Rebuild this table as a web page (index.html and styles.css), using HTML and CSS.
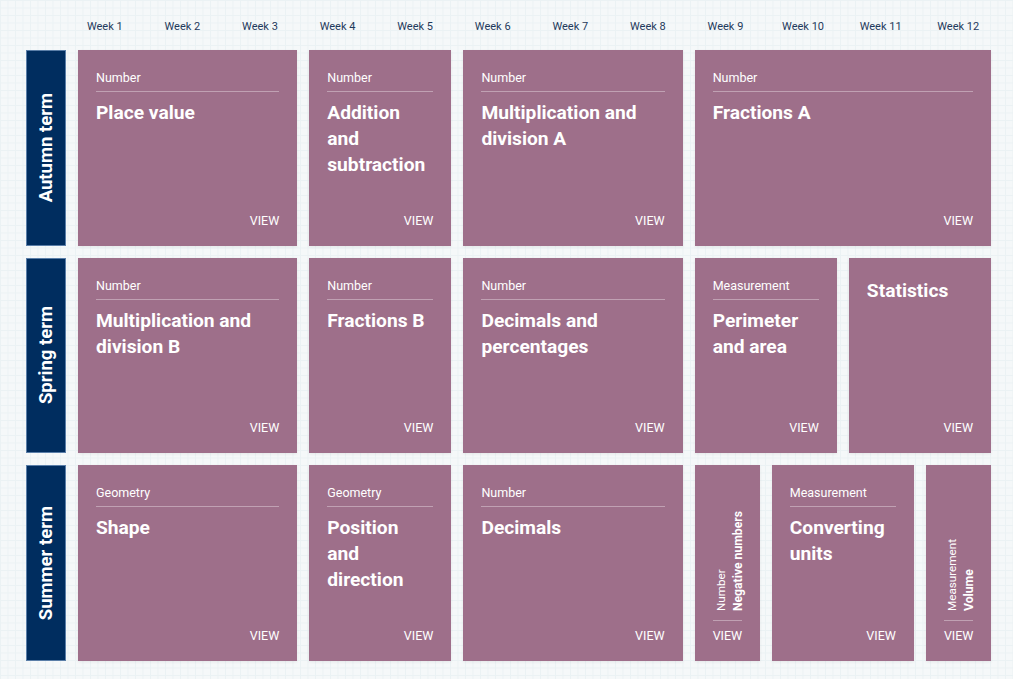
FILE: index.html
```html
<!DOCTYPE html>
<html lang="en">
<head>
<meta charset="utf-8">
<title>Year overview</title>
<link rel="stylesheet" href="styles.css">
</head>
<body>
<main class="planner">
  <div class="weeks">
    <span>Week 1</span><span>Week 2</span><span>Week 3</span><span>Week 4</span>
    <span>Week 5</span><span>Week 6</span><span>Week 7</span><span>Week 8</span>
    <span>Week 9</span><span>Week 10</span><span>Week 11</span><span>Week 12</span>
  </div>

  <section class="term">
    <h2 class="term-label"><span>Autumn term</span></h2>
    <article class="card span-3">
      <div class="card-cat">Number</div>
      <h3 class="card-title">Place value</h3>
      <a class="card-view">VIEW</a>
    </article>
    <article class="card span-2">
      <div class="card-cat">Number</div>
      <h3 class="card-title">Addition and subtraction</h3>
      <a class="card-view">VIEW</a>
    </article>
    <article class="card span-3">
      <div class="card-cat">Number</div>
      <h3 class="card-title">Multiplication and division A</h3>
      <a class="card-view">VIEW</a>
    </article>
    <article class="card span-4">
      <div class="card-cat">Number</div>
      <h3 class="card-title">Fractions A</h3>
      <a class="card-view">VIEW</a>
    </article>
  </section>

  <section class="term">
    <h2 class="term-label"><span>Spring term</span></h2>
    <article class="card span-3">
      <div class="card-cat">Number</div>
      <h3 class="card-title">Multiplication and division B</h3>
      <a class="card-view">VIEW</a>
    </article>
    <article class="card span-2">
      <div class="card-cat">Number</div>
      <h3 class="card-title">Fractions B</h3>
      <a class="card-view">VIEW</a>
    </article>
    <article class="card span-3">
      <div class="card-cat">Number</div>
      <h3 class="card-title">Decimals and percentages</h3>
      <a class="card-view">VIEW</a>
    </article>
    <article class="card span-2">
      <div class="card-cat">Measurement</div>
      <h3 class="card-title">Perimeter and area</h3>
      <a class="card-view">VIEW</a>
    </article>
    <article class="card span-2">
      <h3 class="card-title">Statistics</h3>
      <a class="card-view">VIEW</a>
    </article>
  </section>

  <section class="term">
    <h2 class="term-label"><span>Summer term</span></h2>
    <article class="card span-3">
      <div class="card-cat">Geometry</div>
      <h3 class="card-title">Shape</h3>
      <a class="card-view">VIEW</a>
    </article>
    <article class="card span-2">
      <div class="card-cat">Geometry</div>
      <h3 class="card-title">Position and direction</h3>
      <a class="card-view">VIEW</a>
    </article>
    <article class="card span-3">
      <div class="card-cat">Number</div>
      <h3 class="card-title">Decimals</h3>
      <a class="card-view">VIEW</a>
    </article>
    <article class="card card-narrow span-1">
      <div class="vert">
        <div class="vert-text"><span class="vert-cat">Number</span><span class="vert-title">Negative numbers</span></div>
      </div>
      <a class="card-view">VIEW</a>
    </article>
    <article class="card span-2">
      <div class="card-cat">Measurement</div>
      <h3 class="card-title">Converting units</h3>
      <a class="card-view">VIEW</a>
    </article>
    <article class="card card-narrow span-1">
      <div class="vert">
        <div class="vert-text"><span class="vert-cat">Measurement</span><span class="vert-title">Volume</span></div>
      </div>
      <a class="card-view">VIEW</a>
    </article>
  </section>
</main>
</body>
</html>
```

FILE: styles.css
```css
html, body {
  margin: 0;
  padding: 0;
}

body {
  width: 1013px;
  height: 679px;
  overflow: hidden;
  font-family: Roboto, "Liberation Sans", Arial, sans-serif;
  background-color: #f5f8f9;
  background-image:
    linear-gradient(to right, #ebf2f4 1px, transparent 1px),
    linear-gradient(to bottom, #ebf2f4 1px, transparent 1px);
  background-size: 7.5px 7.5px;
}

.planner {
  padding: 14px 22px 0 26px;
}

.weeks {
  display: grid;
  grid-template-columns: repeat(12, 1fr);
  margin: 0 -6px 0 40px;
  height: 24px;
  align-items: center;
}

.weeks span {
  text-align: center;
  font-size: 11px;
  color: #1f3a5c;
}

.term {
  display: grid;
  grid-template-columns: 40px repeat(12, 1fr);
  column-gap: 12px;
  height: 195.5px;
  margin-top: 12px;
}

.term-label {
  margin: 0;
  background: #002d5f;
  border: 1px solid #5a7ea8;
  box-sizing: border-box;
  display: flex;
  align-items: center;
  justify-content: center;
}

.term-label span {
  writing-mode: vertical-rl;
  transform: rotate(180deg);
  color: #ffffff;
  font-size: 18.5px;
  font-weight: 700;
  white-space: nowrap;
}

.span-1 { grid-column: span 1; }
.span-2 { grid-column: span 2; }
.span-3 { grid-column: span 3; }
.span-4 { grid-column: span 4; }

.card {
  background: #9e6f8a;
  color: #ffffff;
  padding: 21px 18px 18px;
  display: flex;
  flex-direction: column;
  box-shadow: 0 1px 3px rgba(0, 0, 0, 0.07);
  min-width: 0;
}

.card-cat {
  font-size: 12.5px;
  line-height: 14px;
  padding-bottom: 6px;
  border-bottom: 1px solid rgba(255, 255, 255, 0.35);
}

.card-title {
  margin: 0;
  font-size: 19.2px;
  line-height: 26px;
  font-weight: 700;
}

.card-cat + .card-title {
  margin-top: 8px;
}

.card > .card-title:first-child {
  margin-top: -1px;
}

.card-view {
  margin-top: auto;
  align-self: flex-end;
  font-size: 12.5px;
  line-height: 14px;
  color: #ffffff;
  cursor: pointer;
}

.card-narrow .vert {
  flex: 1;
  display: flex;
  flex-direction: column;
  justify-content: flex-end;
  padding-bottom: 8px;
  border-bottom: 1px solid rgba(255, 255, 255, 0.35);
  margin-bottom: 8px;
}

.vert-text {
  writing-mode: vertical-rl;
  transform: rotate(180deg);
  line-height: 17px;
  white-space: nowrap;
}

.vert-cat {
  display: block;
  font-size: 11.7px;
}

.vert-title {
  display: block;
  font-size: 12.2px;
  font-weight: 700;
}

.card-narrow .card-view {
  margin-top: 0;
  align-self: flex-start;
}
```
